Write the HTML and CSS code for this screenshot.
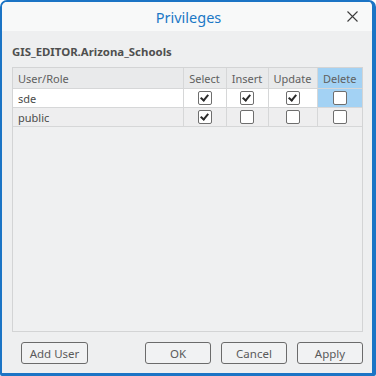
FILE: index.html
```html
<!DOCTYPE html>
<html lang="en">
<head>
<meta charset="UTF-8" />
<title>Privileges</title>
<link rel="stylesheet" href="styles.css">
</head>
<body>

<div class="window">
  <div class="titlebar">
    <span></span>
    <div class="title">Privileges</div>
    <button class="close" aria-label="Close">
      <svg width="11" height="11" viewBox="0 0 11 11"><path d="M0.5 0.5L10.5 10.5M10.5 0.5L0.5 10.5" stroke="#3c3c3c" stroke-width="1.1" fill="none"/></svg>
    </button>
  </div>

  <div class="content">
    <div class="dataset">GIS_EDITOR.Arizona_Schools</div>

    <div class="grid">
      <table>
        <colgroup>
          <col class="c-user"><col class="c-select"><col class="c-insert"><col class="c-update"><col class="c-delete">
        </colgroup>
        <thead>
          <tr>
            <th class="left">User/Role</th>
            <th>Select</th>
            <th>Insert</th>
            <th>Update</th>
            <th class="active">Delete</th>
          </tr>
        </thead>
        <tbody>
          <tr class="selected">
            <td class="left">sde</td>
            <td><span class="cb checked"></span></td>
            <td><span class="cb checked"></span></td>
            <td><span class="cb checked"></span></td>
            <td class="active"><span class="cb"></span></td>
          </tr>
          <tr>
            <td class="left">public</td>
            <td><span class="cb checked"></span></td>
            <td><span class="cb"></span></td>
            <td><span class="cb"></span></td>
            <td><span class="cb"></span></td>
          </tr>
        </tbody>
      </table>
    </div>

    <div class="buttons">
      <button class="btn">Add User</button>
      <span class="spacer"></span>
      <button class="btn">OK</button>
      <button class="btn">Cancel</button>
      <button class="btn">Apply</button>
    </div>
  </div>
</div>

</body>
</html>
```

FILE: styles.css
```css
body {
  margin: 0;
  background: #ffffff;
  font-family: 'Noto Sans', 'Open Sans', sans-serif;
}

.window {
  width: 376px;
  height: 376px;
  box-sizing: border-box;
  border-style: solid;
  border-color: #1b74c5;
  border-width: 2px 4px 3px 2px;
  border-radius: 7px 7px 2px 2px;
  background: #eeeff0;
  display: flex;
  flex-direction: column;
  overflow: hidden;
}

/* Barra de titulo */
.titlebar {
  height: 29px;
  background: #f8f9f9;
  display: grid;
  grid-template-columns: 1fr auto 1fr;
  align-items: center;
}

.title {
  color: #1b78c6;
  font-size: 14.5px;
  padding-top: 1px;
  padding-left: 3px;
}

.close {
  justify-self: end;
  margin-right: 14px;
  border: none;
  background: none;
  padding: 0;
  width: 12px;
  height: 12px;
  display: flex;
  align-items: center;
  justify-content: center;
}

/* Contenido */
.content {
  flex: 1;
  display: flex;
  flex-direction: column;
  padding: 13px 9px 9px 10px;
}

.dataset {
  height: 16px;
  line-height: 16px;
  font-size: 11.4px;
  font-weight: bold;
  color: #4f4f4f;
  margin-bottom: 7px;
}

.grid {
  flex: 1;
  border: 1px solid #d3d4d5;
  background: #eff0f1;
}

table {
  width: 100%;
  border-collapse: collapse;
  table-layout: fixed;
  font-size: 11px;
  color: #606060;
}

.c-user { width: 170px; }
.c-select { width: 43px; }
.c-insert { width: 42px; }
.c-update { width: 49px; }

th, td {
  border-right: 1px solid #d6d7d8;
  border-bottom: 1px solid #d6d7d8;
  padding: 0;
  text-align: center;
  vertical-align: middle;
}
th:last-child, td:last-child { border-right: none; }

th {
  height: 20px;
  background: #e9eaeb;
  font-weight: normal;
}

td {
  height: 18px;
  background: #eeeeef;
}

.selected td { background: #ffffff; }
td.left { color: #4a4a4a; }

.left {
  text-align: left;
  padding-left: 5px;
}

th.active, .selected td.active {
  background: #a3d2f4;
}

/* Casillas */
.cb {
  display: inline-block;
  width: 12px;
  height: 12px;
  border: 1px solid #6e6e6e;
  border-radius: 2px;
  background: #fff;
  vertical-align: middle;
  position: relative;
  top: -1px;
}

.cb.checked::after {
  content: '';
  position: absolute;
  left: 3px;
  top: 1px;
  width: 3px;
  height: 6px;
  border: solid #2b2b2b;
  border-width: 0 2px 2px 0;
  transform: rotate(40deg);
}

/* Botones */
.buttons {
  display: flex;
  gap: 10px;
  margin-top: 10px;
  margin-left: 9px;
}

.spacer { flex: 1; }

.btn {
  height: 22px;
  width: 66px;
  box-sizing: border-box;
  border: 1px solid #6b6b6b;
  border-radius: 3px;
  background: #f1f2f3;
  font-family: 'Noto Sans', 'Open Sans', sans-serif;
  font-size: 11.5px;
  color: #5a5a5a;
  padding: 0;
}

.btn:first-child { width: 67px; }
```
